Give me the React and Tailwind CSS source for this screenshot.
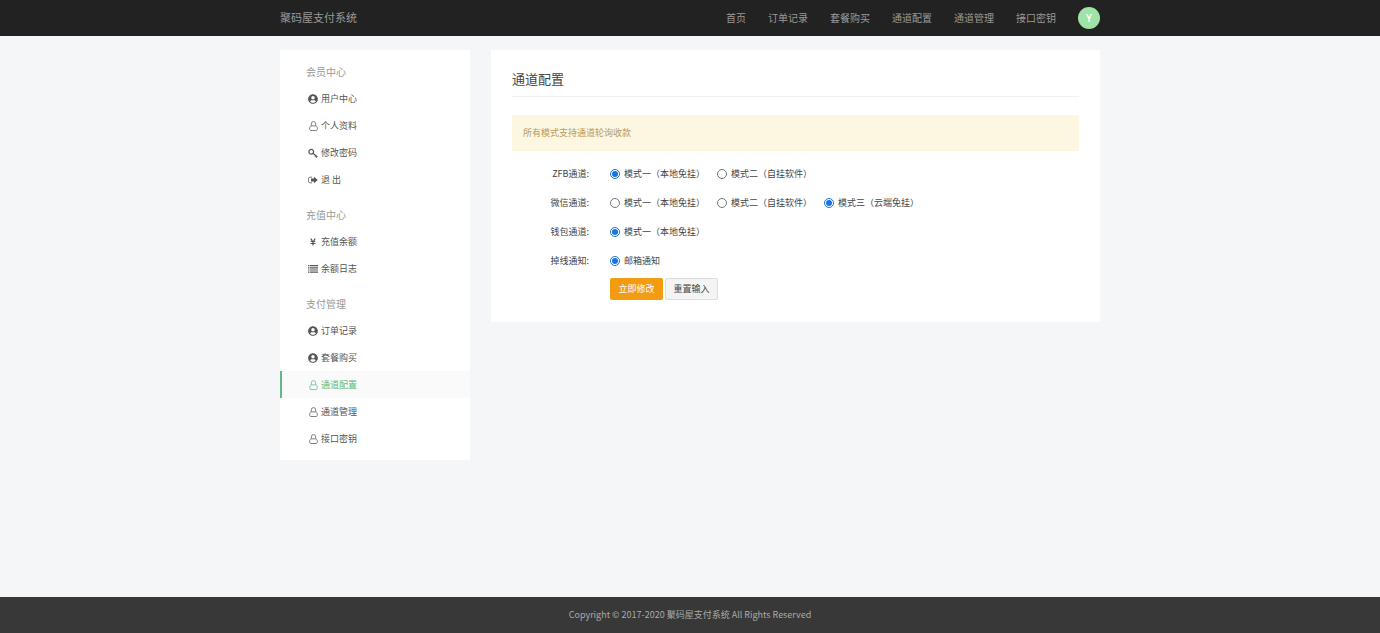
import React from "react";
import { FaUserCircle, FaYenSign } from "react-icons/fa";

function CircleUser() {
  return <FaUserCircle className="h-[10px] w-[10px]" aria-hidden="true" />;
}

function UserOutline() {
  return (
    <svg viewBox="0 0 18 20" className="h-[10px] w-[9px]" fill="none" stroke="currentColor" strokeWidth="1.5" aria-hidden="true">
      <path d="M4.700 9.500V5.500a4.300 4.300 0 0 1 8.600 0v4" />
      <path d="M5 9.700h8c2.300 0 3.700 2 3.700 6 0 2-1 3.300-2.700 3.300H4c-1.700 0-2.700-1.300-2.700-3.300 0-4 1.400-6 3.700-6Z" />
    </svg>
  );
}

function KeyIcon() {
  return (
    <svg viewBox="0 0 20 20" className="h-[10px] w-[10px]" fill="none" stroke="currentColor" aria-hidden="true">
      <circle cx="6.500" cy="7.500" r="4.700" strokeWidth="2.500" />
      <path d="m10 10.500 8.500 7M13.500 17l2.500-2.500M16 19l2.500-2.500" strokeWidth="2.200" />
    </svg>
  );
}

function SignOutIcon() {
  return (
    <svg viewBox="0 0 20 20" className="h-[10px] w-[10px]" fill="currentColor" aria-hidden="true">
      <path d="M8 3.500V5H4.500A2.500 2.500 0 0 0 2 7.500v5A2.500 2.500 0 0 0 4.500 15H8v1.500H4.500a4 4 0 0 1-4-4v-5a4 4 0 0 1 4-4H8ZM12 3.500 19.500 10 12 16.500V13H6V7h6V3.500Z" />
    </svg>
  );
}

function YenIcon() {
  return <FaYenSign className="h-[8px] w-[6px]" aria-hidden="true" />;
}

function ListIcon() {
  return (
    <svg viewBox="0 0 10 8" className="h-[8px] w-[10px]" fill="currentColor" aria-hidden="true">
      <path d="M0 0h1.500v1.200H0zM2 0h8v1.200H2zM0 2.200h1.500v1.200H0zM2 2.200h8v1.200H2zM0 4.400h1.500v1.200H0zM2 4.400h8v1.200H2zM0 6.600h1.500v1.200H0zM2 6.600h8v1.200H2z" />
    </svg>
  );
}

const navLinks = ["首页", "订单记录", "套餐购买", "通道配置", "通道管理", "接口密钥"];

const menu = [
  {
    title: "会员中心",
    items: [
      { label: "用户中心", Icon: CircleUser },
      { label: "个人资料", Icon: UserOutline },
      { label: "修改密码", Icon: KeyIcon },
      { label: "退 出", Icon: SignOutIcon },
    ],
  },
  {
    title: "充值中心",
    items: [
      { label: "充值余额", Icon: YenIcon },
      { label: "余额日志", Icon: ListIcon },
    ],
  },
  {
    title: "支付管理",
    items: [
      { label: "订单记录", Icon: CircleUser },
      { label: "套餐购买", Icon: CircleUser },
      { label: "通道配置", Icon: UserOutline, active: true },
      { label: "通道管理", Icon: UserOutline },
      { label: "接口密钥", Icon: UserOutline },
    ],
  },
];

const channels = [
  { name: "zfb", label: "ZFB通道:", options: ["模式一（本地免挂）", "模式二（自挂软件）"], selected: 0 },
  { name: "wechat", label: "微信通道:", options: ["模式一（本地免挂）", "模式二（自挂软件）", "模式三（云端免挂）"], selected: 2 },
  { name: "wallet", label: "钱包通道:", options: ["模式一（本地免挂）"], selected: 0 },
  { name: "notice", label: "掉线通知:", options: ["邮箱通知"], selected: 0 },
];

function Header() {
  return (
    <header className="bg-[#222222]">
      <div className="mx-auto flex h-9 max-w-[820px] items-center justify-between text-[#999999]">
        <a href="#" className="pb-[2px] text-[11px]">聚码屋支付系统</a>
        <div className="flex items-center gap-[22px]">
          <nav className="flex items-center gap-[22px] pb-[2px] text-[10px]">
            {navLinks.map((label) => (
              <a key={label} href="#">{label}</a>
            ))}
          </nav>
          <button type="button" className="flex h-[22px] w-[22px] items-center justify-center rounded-full bg-[#9fe3a6] font-['Open_Sans',sans-serif] text-[10px] font-semibold text-white">
            Y
          </button>
        </div>
      </div>
    </header>
  );
}

function Sidebar() {
  return (
    <aside className="flex w-[190px] shrink-0 flex-col gap-[8px] bg-white py-[8px]">
      {menu.map((group) => (
        <section key={group.title}>
          <h2 className="pl-[26px] text-[10px] leading-[27px] text-[#999999]">{group.title}</h2>
          <ul>
            {group.items.map(({ label, Icon, active }) => (
              <li key={label}>
                <a
                  href="#"
                  className={
                    active
                      ? "flex h-[27px] items-center gap-[2px] border-l-2 border-[#5fb98a] bg-[#fafafa] pl-[25px] text-[9px] text-[#56bd84]"
                      : "flex h-[27px] items-center gap-[2px] border-l-2 border-transparent pl-[25px] text-[9px] text-[#555555]"
                  }
                >
                  <span className="flex w-[12px] justify-center"><Icon /></span>
                  {label}
                </a>
              </li>
            ))}
          </ul>
        </section>
      ))}
    </aside>
  );
}

function ChannelForm() {
  return (
    <form className="mt-[8px]">
      {channels.map(({ name, label, options, selected }) => (
        <fieldset key={name} aria-labelledby={name + "-label"} className="flex h-[29px] items-center">
          <span id={name + "-label"} className="w-[77px] text-right">{label}</span>
          <div className="flex items-center gap-[12px] pl-[21px]">
            {options.map((option, i) => (
              <label key={option} className="flex items-center gap-[4px]">
                <input type="radio" name={name} defaultChecked={i === selected} className="m-0 h-[10px] w-[10px] accent-[#1a73e0]" />
                {option}
              </label>
            ))}
          </div>
        </fieldset>
      ))}
      <div className="mt-[3px] flex gap-[2px] pl-[98px]">
        <button type="submit" className="h-[22px] w-[53px] rounded-[2px] bg-[#f39c12] text-white">立即修改</button>
        <button type="reset" className="h-[22px] w-[53px] rounded-[2px] border border-[#dddddd] bg-[#f4f4f4] text-[#444444]">重置输入</button>
      </div>
    </form>
  );
}

export default function App() {
  return (
    <div className="flex min-h-screen flex-col bg-[#f4f6f8] font-['Noto_Sans_CJK_SC',sans-serif] text-[9px] text-[#444444]">
      <Header />
      <div className="mx-auto flex w-full max-w-[820px] grow items-start gap-[21px] pt-[14px] pb-6">
        <Sidebar />
        <main className="min-w-0 grow bg-white px-[21px] pt-[18px] pb-[22px]">
          <h1 className="border-b border-[#f0f0f0] pb-[6px] text-[13px] leading-[22px]">通道配置</h1>
          <p className="mt-[18px] bg-[#fdf6e0] px-[11px] py-[10px] leading-[16px] text-[#b89a5e]">
            所有模式支持通道轮询收款
          </p>
          <ChannelForm />
        </main>
      </div>
      <footer className="flex h-9 items-center justify-center bg-[#383838] text-[9px] text-[#aaaaaa]">
        Copyright © 2017-2020 聚码屋支付系统 All Rights Reserved
      </footer>
    </div>
  );
}
